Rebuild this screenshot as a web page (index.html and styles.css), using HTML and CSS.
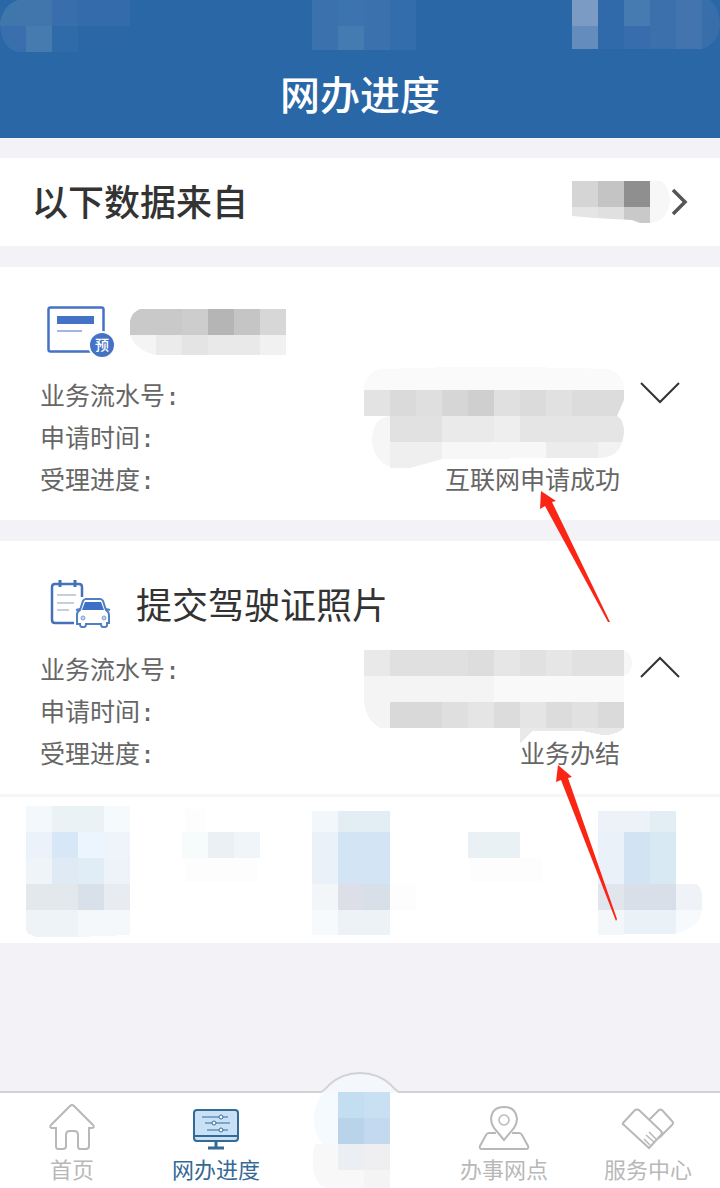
FILE: index.html
```html
<!DOCTYPE html>
<html lang="zh-CN">
<head>
    <meta charset="UTF-8">
    <meta name="viewport" content="width=device-width, initial-scale=1.0">
    <title>网办进度</title>
    <link rel="stylesheet" href="styles.css">
</head>
<body>
    <header class="header">
        <div class="status-bar" aria-hidden="true">
            <svg class="mask" width="156" height="52" viewBox="0 0 156 52">
                <clipPath id="statusLeft"><path d="M18 0H130V52H18Q0 48 0 22Q4 4 18 0Z"/></clipPath>
                <g clip-path="url(#statusLeft)">
                    <rect width="26" height="26" fill="#3f77ac"/>
                    <rect x="26" width="26" height="26" fill="#4176ad"/>
                    <rect x="52" width="26" height="26" fill="#386eac"/>
                    <rect x="78" width="52" height="26" fill="#336bab"/>
                    <rect y="26" width="26" height="26" fill="#386fac"/>
                    <rect x="26" y="26" width="26" height="26" fill="#467bb0"/>
                    <rect x="52" y="26" width="26" height="26" fill="#306ba9"/>
                    <rect x="78" y="26" width="52" height="26" fill="#2b67a7"/>
                </g>
            </svg>
            <svg class="mask" width="104" height="50" viewBox="0 0 104 50">
                <rect width="78" height="50" fill="#3b72ad"/>
                <rect x="26" width="26" height="26" fill="#3c74af"/>
                <rect x="26" y="26" width="26" height="24" fill="#447bb0"/>
                <rect x="78" width="26" height="50" fill="#336dab"/>
            </svg>
            <svg class="mask" width="148" height="50" viewBox="0 0 148 50">
                <clipPath id="statusRight"><path d="M0 0H138Q148 8 148 26Q146 44 130 49H0Z"/></clipPath>
                <g clip-path="url(#statusRight)">
                    <rect width="26" height="26" fill="#7b9bc5"/>
                    <rect y="26" width="26" height="24" fill="#648dbd"/>
                    <rect x="26" width="26" height="50" fill="#306aaa"/>
                    <rect x="52" width="26" height="26" fill="#457bb0"/>
                    <rect x="52" y="26" width="26" height="24" fill="#386dad"/>
                    <rect x="78" width="26" height="50" fill="#3c70ac"/>
                    <rect x="104" width="26" height="50" fill="#4374ad"/>
                    <rect x="130" width="18" height="50" fill="#386eaa"/>
                </g>
            </svg>
        </div>
        <h1 class="title">网办进度</h1>
    </header>

    <main class="content">
        <button type="button" class="source">
            <span class="source-label">以下数据来自</span>
            <svg class="mask" width="98" height="42" viewBox="0 0 98 42">
                <path d="M78 0H90Q98 6 98 22Q96 36 84 41L78 42Z" fill="#f7f7f7"/>
                <clipPath id="sourceMask"><path d="M0 0H78V42H68L60 39L22 37L0 35Z"/></clipPath>
                <g clip-path="url(#sourceMask)">
                    <rect width="26" height="26" fill="#d5d5d5"/>
                    <rect x="26" width="26" height="26" fill="#c4c4c4"/>
                    <rect x="52" width="26" height="26" fill="#8f8f8f"/>
                    <rect y="26" width="26" height="16" fill="#e5e5e5"/>
                    <rect x="26" y="26" width="26" height="16" fill="#e0e0e0"/>
                    <rect x="52" y="26" width="26" height="16" fill="#c9c9c9"/>
                </g>
            </svg>
            <svg width="18" height="30" viewBox="0 0 18 30">
                <path d="M3 3L15 15L3 27" fill="none" stroke="#555" stroke-width="3.500"/>
            </svg>
        </button>

        <section class="card">
            <div class="card-head">
                <svg width="72" height="60" viewBox="0 0 72 60">
                    <rect x="4.500" y="5.500" width="55" height="44" rx="2" fill="#fff" stroke="#4472c4" stroke-width="2.500"/>
                    <rect x="13" y="14" width="37" height="8" fill="#4472c4"/>
                    <rect x="13" y="28" width="25" height="2" fill="#a3b7de"/>
                    <circle cx="58" cy="43" r="13" fill="#4472c4" stroke="#fff" stroke-width="2"/>
                    <text class="badge-text" x="58" y="48">预</text>
                </svg>
                <svg class="mask card-mask" width="156" height="46" viewBox="0 0 156 46">
                    <clipPath id="nameMask"><path d="M10 0H156V46H26Q6 42 0 26V12Q2 3 10 0Z"/></clipPath>
                    <g clip-path="url(#nameMask)">
                        <rect width="52" height="26" fill="#c9c9c9"/>
                        <rect x="52" width="26" height="26" fill="#cdcdcd"/>
                        <rect x="78" width="26" height="26" fill="#b5b5b5"/>
                        <rect x="104" width="26" height="26" fill="#c5c5c5"/>
                        <rect x="130" width="26" height="26" fill="#d7d7d7"/>
                        <rect y="26" width="26" height="20" fill="#f4f4f4"/>
                        <rect x="26" y="26" width="26" height="20" fill="#ebebeb"/>
                        <rect x="52" y="26" width="26" height="20" fill="#e4e4e4"/>
                        <rect x="78" y="26" width="52" height="20" fill="#e9e9e9"/>
                        <rect x="130" y="26" width="26" height="20" fill="#f1f1f1"/>
                    </g>
                </svg>
            </div>
            <div class="card-body">
                <dl class="details">
                    <div class="row"><dt>业务流水号:</dt><dd></dd></div>
                    <div class="row"><dt>申请时间:</dt><dd></dd></div>
                    <div class="row"><dt>受理进度:</dt><dd>互联网申请成功</dd></div>
                </dl>
                <button type="button" class="toggle" aria-label="展开">
                    <svg width="40" height="22" viewBox="0 0 40 22"><path d="M1 1L20 20L39 1"/></svg>
                </button>
                <svg class="mask details-mask mask-first" width="270" height="104" viewBox="0 0 270 104">
                    <path d="M2 24Q2 8 18 3Q130 -1 246 3Q262 8 262 24Z" fill="#fafafa"/>
                    <path d="M28 50Q10 52 10 75Q12 98 32 102H46L80 93L220 92Q258 90 262 66Q262 56 254 48Z" fill="#f6f6f6"/>
                    <clipPath id="serialMask"><path d="M2 24H262V34L255 50Q262 54 262 66Q260 92 238 92H84L48 102H28V50H2Z"/></clipPath>
                    <g clip-path="url(#serialMask)">
                        <rect x="2" y="24" width="26" height="26" fill="#e3e3e3"/>
                        <rect x="28" y="24" width="26" height="26" fill="#dadada"/>
                        <rect x="54" y="24" width="26" height="26" fill="#dfdfdf"/>
                        <rect x="80" y="24" width="26" height="26" fill="#d6d6d6"/>
                        <rect x="106" y="24" width="26" height="26" fill="#cfcfcf"/>
                        <rect x="132" y="24" width="26" height="26" fill="#e0e0e0"/>
                        <rect x="158" y="24" width="26" height="26" fill="#dbdbdb"/>
                        <rect x="184" y="24" width="26" height="26" fill="#e1e1e1"/>
                        <rect x="210" y="24" width="52" height="26" fill="#dcdcdc"/>
                        <rect x="28" y="50" width="52" height="26" fill="#e1e1e1"/>
                        <rect x="80" y="50" width="52" height="26" fill="#eaeaea"/>
                        <rect x="132" y="50" width="26" height="26" fill="#eeeeee"/>
                        <rect x="158" y="50" width="104" height="26" fill="#e5e5e5"/>
                        <rect x="28" y="76" width="52" height="26" fill="#efefef"/>
                        <rect x="80" y="76" width="104" height="26" fill="#f7f7f7"/>
                        <rect x="184" y="76" width="52" height="26" fill="#ececec"/>
                        <rect x="236" y="76" width="26" height="26" fill="#f2f2f2"/>
                    </g>
                </svg>
            </div>
            <svg class="pointer pointer-first" width="72" height="132" viewBox="0 0 72 132">
                <path d="M2 0L17 10L13 11L71 131L69 131L6 15L1 18Z" fill="#fb2516"/>
            </svg>
        </section>

        <section class="card">
            <div class="card-head">
                <svg width="72" height="60" viewBox="0 0 72 60" fill="none">
                    <path d="M30 47H11Q8 47 8 44V11Q8 8 11 8H35Q38 8 38 11V21" stroke="#4472b8" stroke-width="2.500"/>
                    <path d="M16 4V11M31 4V11" stroke="#4472b8" stroke-width="3"/>
                    <path d="M13 19H32M13 27H30M13 34H25" stroke="#c5cedd" stroke-width="2"/>
                    <path d="M36 34L39 25Q40 23 42 23H56Q58 23 59 25L62 34Q65 36 65 39V47H63V49Q63 51 61 51H59Q57 51 57 48H42Q42 51 40 51H38Q36 51 36 48H33V39Q33 35 36 34Z" fill="#fff" stroke="#4f7fc2" stroke-width="2"/>
                    <path d="M41 26H57L60 34H38Z" fill="#3d70c6"/>
                    <path d="M32 34L36 33M66 34L62 33" stroke="#4f7fc2" stroke-width="2"/>
                    <circle cx="39" cy="42" r="2" fill="#c5d5ed" stroke="#7fa0d2"/>
                    <circle cx="60" cy="42" r="2" fill="#c5d5ed" stroke="#7fa0d2"/>
                </svg>
                <h2 class="card-title">提交驾驶证照片</h2>
            </div>
            <div class="card-body">
                <dl class="details">
                    <div class="row"><dt>业务流水号:</dt><dd></dd></div>
                    <div class="row"><dt>申请时间:</dt><dd></dd></div>
                    <div class="row"><dt>受理进度:</dt><dd>业务办结</dd></div>
                </dl>
                <button type="button" class="toggle" aria-label="收起">
                    <svg width="40" height="22" viewBox="0 0 40 22"><path d="M1 21L20 2L39 21"/></svg>
                </button>
                <svg class="mask details-mask mask-second" width="270" height="104" viewBox="0 0 270 104">
                    <path d="M262 0Q270 2 270 14Q269 24 262 26Z" fill="#f7f7f7"/>
                    <path d="M2 26H262V52H28V78H18Q4 70 2 52Z" fill="#f4f4f4"/>
                    <rect x="132" y="26" width="130" height="26" fill="#f9f9f9"/>
                    <rect x="2" width="26" height="26" fill="#e9e9e9"/>
                    <rect x="28" width="78" height="26" fill="#e0e0e0"/>
                    <rect x="106" width="26" height="26" fill="#dddddd"/>
                    <rect x="132" width="26" height="26" fill="#e6e6e6"/>
                    <rect x="158" width="26" height="26" fill="#e1e1e1"/>
                    <rect x="184" width="26" height="26" fill="#e6e6e6"/>
                    <rect x="210" width="52" height="26" fill="#e1e1e1"/>
                    <rect x="28" y="52" width="52" height="26" fill="#d9d9d9"/>
                    <rect x="80" y="52" width="26" height="26" fill="#dfdfdf"/>
                    <rect x="106" y="52" width="26" height="26" fill="#e5e5e5"/>
                    <rect x="132" y="52" width="26" height="26" fill="#dcdcdc"/>
                    <rect x="158" y="52" width="26" height="26" fill="#e5e5e5"/>
                    <rect x="184" y="52" width="26" height="26" fill="#dcdcdc"/>
                    <rect x="210" y="52" width="26" height="26" fill="#e1e1e1"/>
                    <rect x="236" y="52" width="26" height="26" fill="#dadada"/>
                    <path d="M158 78H262Q256 85 240 85L220 81H170L158 94Z" fill="#e9e9e9"/>
                </svg>
            </div>
            <svg class="pointer pointer-second" width="62" height="156" viewBox="0 0 62 156">
                <path d="M3 0L17 12L13 13L62 154L61 156L6 15L1 17Z" fill="#fb2516"/>
            </svg>
            <div class="steps">
                <svg class="mask" width="104" height="132" viewBox="0 0 104 132">
                    <rect width="26" height="26" fill="#f2f8fb"/>
                    <rect x="26" width="52" height="26" fill="#eaf2f5"/>
                    <rect x="78" width="26" height="26" fill="#f5fafd"/>
                    <rect y="26" width="26" height="26" fill="#ecf2f9"/>
                    <rect x="26" y="26" width="26" height="26" fill="#d7e7f8"/>
                    <rect x="52" y="26" width="26" height="26" fill="#ecf5fe"/>
                    <rect x="78" y="26" width="26" height="26" fill="#eff4fa"/>
                    <rect y="52" width="26" height="26" fill="#eff4f8"/>
                    <rect x="26" y="52" width="26" height="26" fill="#dfeaf4"/>
                    <rect x="52" y="52" width="26" height="26" fill="#e0ecf6"/>
                    <rect x="78" y="52" width="26" height="26" fill="#edf3f8"/>
                    <rect y="78" width="52" height="26" fill="#e3e8ec"/>
                    <rect x="52" y="78" width="26" height="26" fill="#d8e1ea"/>
                    <rect x="78" y="78" width="26" height="26" fill="#e8ecf0"/>
                    <path d="M0 104H52V131H12Q2 130 0 124Z" fill="#eef3f7"/>
                    <path d="M52 104H104V129L52 131Z" fill="#f4f8fb"/>
                </svg>
                <svg class="mask" width="78" height="132" viewBox="0 0 78 132">
                    <rect x="3" y="3" width="20" height="23" fill="#fdfdfd"/>
                    <rect y="26" width="26" height="26" fill="#f6fbfb"/>
                    <rect x="26" y="26" width="26" height="26" fill="#eaf0f4"/>
                    <rect x="52" y="26" width="26" height="26" fill="#eff5f8"/>
                    <rect x="3" y="52" width="72" height="24" fill="#fdfdfd"/>
                </svg>
                <svg class="mask" width="104" height="132" viewBox="0 0 104 132">
                    <rect y="5" width="26" height="21" fill="#f1f7fb"/>
                    <rect x="26" y="5" width="52" height="21" fill="#e2eef4"/>
                    <rect y="26" width="26" height="52" fill="#ebf1f9"/>
                    <rect x="26" y="26" width="52" height="52" fill="#d3e5f4"/>
                    <rect y="78" width="26" height="26" fill="#f2f6f9"/>
                    <rect x="26" y="78" width="26" height="26" fill="#dcdfe8"/>
                    <rect x="52" y="78" width="26" height="26" fill="#d7dfe8"/>
                    <rect y="104" width="26" height="25" fill="#f6fafd"/>
                    <rect x="26" y="104" width="52" height="25" fill="#edf2f6"/>
                    <rect x="78" y="78" width="26" height="26" fill="#fdfdfe"/>
                </svg>
                <svg class="mask" width="78" height="132" viewBox="0 0 78 132">
                    <rect y="26" width="52" height="26" fill="#e9f1f5"/>
                    <rect x="2" y="52" width="72" height="24" fill="#fdfdfd"/>
                </svg>
                <svg class="mask" width="104" height="132" viewBox="0 0 104 132">
                    <rect y="5" width="52" height="21" fill="#ecf2f8"/>
                    <rect x="52" y="5" width="26" height="21" fill="#e2eef4"/>
                    <rect y="26" width="26" height="52" fill="#ebf1f9"/>
                    <rect x="26" y="26" width="26" height="52" fill="#d2e4f4"/>
                    <rect x="52" y="26" width="26" height="52" fill="#d8e9f4"/>
                    <path d="M78 78H98Q104 81 104 90V104H78Z" fill="#eff2f6"/>
                    <rect y="78" width="26" height="26" fill="#e1e6ed"/>
                    <rect x="26" y="78" width="52" height="26" fill="#d9dfe8"/>
                    <path d="M78 104H104Q102 122 78 127Z" fill="#f6fafd"/>
                    <rect y="104" width="26" height="25" fill="#f3f7fa"/>
                    <rect x="26" y="104" width="52" height="24" fill="#eaf1f7"/>
                </svg>
            </div>
        </section>
    </main>

    <nav class="tabbar">
        <a href="#" class="tab">
            <svg width="50" height="50" viewBox="0 0 50 50">
                <path d="M23 3Q25 1 27 3L46 22Q48 25 45 25H42V43Q42 46 39 46H33Q31 46 31 43V32Q31 28 27 28H23Q19 28 19 32V43Q19 46 16 46H11Q9 46 9 43V25H5Q2 25 4 22Z"/>
            </svg>
            <span>首页</span>
        </a>
        <a href="#" class="tab active">
            <svg width="50" height="50" viewBox="0 0 50 50">
                <rect x="3" y="7" width="44" height="31" rx="3" fill="#c8e1f7"/>
                <path d="M3 33H47"/>
                <path d="M11 14H37M14 20H39M16 27H37" stroke-width="1"/>
                <g fill="#fff" stroke-width="1"><circle cx="30" cy="14" r="2"/><circle cx="23" cy="20" r="2"/><circle cx="30" cy="27" r="2"/></g>
                <path d="M25 39V45M17 45H33" stroke-width="3"/>
            </svg>
            <span>网办进度</span>
        </a>
        <a href="#" class="tab" aria-label="扫码">
            <svg class="bump" width="104" height="118" viewBox="0 0 104 118">
                <path d="M14 21.500Q18 19 21 15Q34 3 52 3Q70 3 83 15Q86 19 90 21.500V23H14Z" fill="#f4f7fb" stroke="none"/>
                <path d="M14 21.500Q18 19 21 15Q34 3 52 3Q70 3 83 15Q86 19 90 21.500" stroke="#d2d2d4"/>
                <g class="mask" stroke="none">
                    <path d="M30 22H18Q7 28 6 48Q6 64 14 74H30Z" fill="#f5fafe"/>
                    <path d="M30 74H8Q4 78 5 92Q5 114 18 118H30Z" fill="#f8f8f8"/>
                    <rect x="30" y="22" width="26" height="26" fill="#c3ddf1"/>
                    <rect x="56" y="22" width="26" height="26" fill="#c9dff2"/>
                    <rect x="30" y="48" width="26" height="26" fill="#b9d4ea"/>
                    <rect x="56" y="48" width="26" height="26" fill="#c3d9f0"/>
                    <rect x="30" y="74" width="26" height="26" fill="#ebeff3"/>
                    <rect x="56" y="74" width="26" height="26" fill="#efeff1"/>
                    <rect x="30" y="100" width="26" height="18" fill="#f8f8f9"/>
                    <rect x="56" y="100" width="26" height="18" fill="#f4f4f5"/>
                </g>
            </svg>
        </a>
        <a href="#" class="tab">
            <svg width="52" height="50" viewBox="0 0 52 50">
                <path d="M18 30H11Q9 30 8 32L2 43Q1 46 4 46H48Q51 46 50 43L44 32Q43 30 41 30H34"/>
                <path d="M26 37L16 25Q13 20 13 16Q14 4 26 4Q38 4 39 16Q39 20 36 25Z"/>
                <circle cx="26" cy="17" r="5" stroke-width="1.500"/>
            </svg>
            <span>办事网点</span>
        </a>
        <a href="#" class="tab">
            <svg width="54" height="50" viewBox="0 0 54 50">
                <path d="M2 20L14 7Q16 6 18 7L40 28Q42 30 40 32L28 45L3 22Q1 21 2 20Z"/>
                <path d="M28 17L38 7Q39 6 41 7L51 18Q53 20 51 22L38 35"/>
                <path d="M23 36L29 42M25 32L33 39M28 29L35 36" stroke-width="1.500"/>
            </svg>
            <span>服务中心</span>
        </a>
    </nav>
</body>
</html>
```
FILE: styles.css
```css
* {
    box-sizing: border-box;
}
body {
    display: flex;
    flex-direction: column;
    min-height: 100vh;
    margin: 0;
    background-color: #f2f2f7;
    color: #333;
    font-family: "Noto Sans CJK SC", sans-serif;
}
h1, h2, dl, dd {
    margin: 0;
}
svg {
    display: block;
    flex-shrink: 0;
}
button {
    border: none;
    background: none;
    padding: 0;
    color: inherit;
    font-family: inherit;
    cursor: pointer;
}
.mask {
    shape-rendering: crispEdges;
}

/* header */
.header {
    background-color: #2a67a7;
    color: white;
}
.status-bar {
    display: flex;
    justify-content: space-between;
    height: 52px;
}
.title {
    padding-bottom: 4px;
    font-size: 40px;
    font-weight: 500;
    line-height: 82px;
    text-align: center;
}

/* content */
.content {
    display: flex;
    flex-direction: column;
    gap: 21px;
    padding: 20px 0;
}
.source {
    display: flex;
    align-items: center;
    width: 100%;
    height: 88px;
    padding: 0 32px;
    background-color: white;
}
.source-label {
    flex: 1;
    padding-bottom: 4px;
    font-size: 36px;
    font-weight: 500;
    text-align: left;
}
.card {
    position: relative;
    background-color: white;
}
.card-head {
    display: flex;
    align-items: center;
    gap: 20px;
    padding: 35px 44px 14px;
}
.card-mask {
    margin-left: -6px;
}
.card-title {
    padding-bottom: 6px;
    font-size: 36px;
    font-weight: 400;
    line-height: 54px;
}
.badge-text {
    fill: white;
    font-size: 14px;
    font-weight: 500;
    text-anchor: middle;
}
.card-body {
    position: relative;
    display: flex;
    align-items: flex-start;
    gap: 20px;
    padding: 0 40px 18px;
}
.details {
    flex: 1;
    color: #666;
    font-family: "DejaVu Sans Mono", "Noto Sans CJK SC", sans-serif;
    font-size: 25px;
    line-height: 42px;
}
.row {
    display: flex;
    justify-content: space-between;
}
.toggle {
    padding: 6px 0;
}
.toggle path {
    fill: none;
    stroke: #333;
    stroke-width: 2;
}
.details-mask {
    position: absolute;
    right: 88px;
}
.mask-first {
    top: -10px;
}
.mask-second {
    top: 0;
}

/* red pointers lie over the cards */
.pointer {
    position: absolute;
    z-index: 1;
}
.pointer-first {
    top: 224px;
    right: 109px;
}
.pointer-second {
    top: 224px;
    right: 103px;
}
.steps {
    display: flex;
    justify-content: space-between;
    padding: 9px 18px 5px 26px;
    border-top: 3px solid #f6f6f9;
}

/* bottom tabs */
.tabbar {
    display: flex;
    margin-top: auto;
    padding-top: 10px;
    border-top: 2px solid #d2d2d4;
    background-color: white;
}
.tab {
    position: relative;
    flex: 1;
    display: flex;
    flex-direction: column;
    align-items: center;
    padding-bottom: 4px;
    color: #b8b8b8;
    font-size: 22px;
    line-height: 31px;
    text-decoration: none;
}
.tab svg {
    fill: none;
    stroke: currentColor;
    stroke-width: 2;
}
.active {
    color: #356a94;
}
.bump {
    position: absolute;
    bottom: 0;
}
```
